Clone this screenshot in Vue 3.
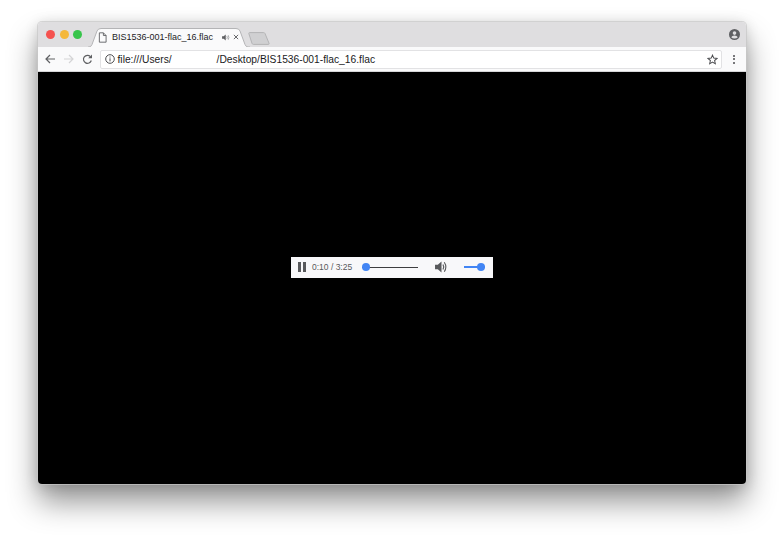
<script setup>
const fileName = 'BIS1536-001-flac_16.flac'
</script>

<template>
  <div class="page">
    <div class="window">
      <div class="tabstrip">
        <div class="lights">
          <span class="light red"></span>
          <span class="light yellow"></span>
          <span class="light green"></span>
        </div>
        <div class="tab">
          <svg class="tab-bg" width="162" height="19" viewBox="0 0 162 19">
            <path d="M0 19 L1 19 Q3 19 4 16.5 L9 3 Q10 .5 13 .5 L148 .5 Q151 .5 152 3 L157 16.5 Q158 19 160 19 L162 19" fill="#fafafb" stroke="#b4b4b6" />
          </svg>
          <svg class="tab-file" width="9" height="11" viewBox="0 0 10 12">
            <path d="M1.5 .8 H6 L9 3.8 V11.2 H1.5 Z M6 .8 V3.8 H9" fill="none" stroke="#5f6063" stroke-width="1" />
          </svg>
          <span class="tab-title">{{ fileName }}</span>
          <svg class="tab-audio" width="8" height="7" viewBox="0 0 9 8">
            <path d="M0 2.6 H1.8 L4.2 .6 V7.4 L1.8 5.4 H0 Z" fill="#5f6063" />
            <path d="M5.5 2.4 Q6.5 4 5.5 5.6 M7 1.4 Q8.6 4 7 6.6" fill="none" stroke="#8a8b8e" stroke-width=".8" />
          </svg>
          <svg class="tab-close" width="6" height="6" viewBox="0 0 7 7">
            <path d="M1 1 L6 6 M6 1 L1 6" stroke="#5f6063" stroke-width="1.1" />
          </svg>
        </div>
        <svg class="new-tab" width="22" height="13" viewBox="0 0 22 13">
          <path d="M.8 1.5 Q.7 .6 1.6 .6 H15.6 Q16.6 .6 17 1.5 L21 11.2 Q21.4 12.4 20.4 12.4 H5.4 Q4.4 12.4 4 11.4 Z" fill="#d0d0d2" stroke="#b4b4b6" />
        </svg>
        <svg class="profile" width="11" height="11" viewBox="0 0 11 11">
          <circle cx="5.5" cy="5.5" r="5.5" fill="#5f6063" />
          <circle cx="5.5" cy="4.1" r="1.8" fill="#dfdee0" />
          <path d="M2.2 8.2 Q3 6.5 5.5 6.5 Q8 6.5 8.8 8.2 Q7.5 9.5 5.5 9.5 Q3.5 9.5 2.2 8.2 Z" fill="#dfdee0" />
        </svg>
      </div>

      <div class="toolbar">
        <svg class="nav back" width="10" height="10" viewBox="0 0 10 10">
          <path d="M10 5 H1 M5 1 L1 5 L5 9" fill="none" stroke="#5f6063" stroke-width="1.2" />
        </svg>
        <svg class="nav forward" width="10" height="10" viewBox="0 0 10 10">
          <path d="M0 5 H9 M5 1 L9 5 L5 9" fill="none" stroke="#d4d4d6" stroke-width="1.2" />
        </svg>
        <svg class="nav reload" width="11" height="11" viewBox="0 0 11 11">
          <path d="M9.3 6.5 A4 4 0 1 1 8.4 2.6" fill="none" stroke="#5f6063" stroke-width="1.2" />
          <path d="M10 .4 V4.2 H6.2 Z" fill="#5f6063" />
        </svg>
        <div class="omnibox">
          <svg class="info" width="10" height="10" viewBox="0 0 10 10">
            <circle cx="5" cy="5" r="4.3" fill="none" stroke="#4c4d50" stroke-width="1" />
            <path d="M5 4.3 V7.4 M5 2.5 V3.5" stroke="#4c4d50" stroke-width="1" />
          </svg>
          <span class="url">file:///Users/</span>
          <span class="url url-rest">/Desktop/{{ fileName }}</span>
          <svg class="star" width="11" height="11" viewBox="0 0 12 12">
            <path d="M6 1.2 L7.4 4.5 L11 4.8 L8.3 7.1 L9.1 10.7 L6 8.8 L2.9 10.7 L3.7 7.1 L1 4.8 L4.6 4.5 Z" fill="none" stroke="#4c4d50" stroke-width="1.1" />
          </svg>
        </div>
        <div class="menu">
          <span></span><span></span><span></span>
        </div>
      </div>

      <div class="viewport">
        <div class="player">
          <div class="pause"><span></span><span></span></div>
          <span class="time">0:10 / 3:25</span>
          <div class="track seek">
            <span class="knob"></span>
          </div>
          <svg class="speaker" width="13" height="12" viewBox="0 0 14 13">
            <path d="M0 4 H3 L7 .6 V12.4 L3 9 H0 Z" fill="#58595c" />
            <path d="M8.6 3.8 Q10.3 6.5 8.6 9.2" fill="none" stroke="#58595c" stroke-width="1.3" />
            <path d="M10 1.4 Q13.4 6.5 10 11.6" fill="none" stroke="#58595c" stroke-width="1.2" />
          </svg>
          <div class="track volume">
            <span class="knob"></span>
          </div>
        </div>
      </div>
    </div>
  </div>
</template>

<style scoped>
.page {
  width: 784px;
  height: 538px;
  padding: 22px 0 0 38px;
  box-sizing: border-box;
  overflow: hidden;
  background: #fff;
  font-family: "Liberation Sans", Arial, sans-serif;
}

.window {
  width: 708px;
  height: 462px;
  display: flex;
  flex-direction: column;
  border-radius: 4px;
  overflow: hidden;
  box-shadow:
    0 0 0 1px rgba(200, 200, 200, 0.7),
    0 18px 30px rgba(0, 0, 0, 0.42),
    0 2px 14px rgba(0, 0, 0, 0.16);
}

.tabstrip {
  height: 25px;
  flex: none;
  display: flex;
  align-items: center;
  background: #dfdee0;
}

.lights {
  display: flex;
  gap: 4.5px;
  margin-left: 8px;
  width: 42px;
  flex: none;
}

.light {
  width: 9px;
  height: 9px;
  border-radius: 50%;
}

.red { background: #f5524f; }
.yellow { background: #f5b83b; }
.green { background: #37c54b; }

.tab {
  position: relative;
  width: 162px;
  height: 19px;
  padding-bottom: 1px;
  box-sizing: border-box;
  flex: none;
  align-self: flex-end;
  display: flex;
  align-items: center;
}

.tab-bg {
  position: absolute;
  left: 0;
  top: 0;
}

.tab-file,
.tab-title,
.tab-audio,
.tab-close {
  position: relative;
}

.tab-file {
  margin-left: 10px;
}

.tab-title {
  margin-left: 5px;
  font-size: 9px;
  color: #1d1d1f;
  white-space: nowrap;
  width: 110px;
}

.tab-close {
  margin-left: 3px;
}

.new-tab {
  margin-left: -2px;
  margin-top: 7px;
  flex: none;
}

.profile {
  margin-left: auto;
  margin-right: 6px;
  flex: none;
}

.toolbar {
  height: 25px;
  flex: none;
  display: flex;
  align-items: center;
  background: #fafafb;
  box-sizing: border-box;
  border-bottom: 1px solid #d6d6d8;
}

.nav {
  flex: none;
}

.back { margin-left: 7px; }
.forward { margin-left: 9px; }
.reload { margin-left: 8px; }

.omnibox {
  flex: none;
  width: 622px;
  height: 19px;
  margin-left: 7px;
  box-sizing: border-box;
  background: #fff;
  border: 1px solid #e2e2e4;
  border-radius: 2px;
  display: flex;
  align-items: center;
  font-size: 10.25px;
  color: #1a1a1c;
}

.info {
  margin-left: 3.5px;
  flex: none;
}

.url {
  margin-left: 3px;
  white-space: nowrap;
}

.url-rest {
  margin-left: 45px;
}

.star {
  margin-left: auto;
  margin-right: 3.5px;
  flex: none;
}

.menu {
  flex: none;
  margin-left: 11px;
  display: flex;
  flex-direction: column;
  gap: 1.5px;
}

.menu span {
  width: 2px;
  height: 2px;
  background: #4c4d50;
  border-radius: 50%;
}

.viewport {
  flex: 1;
  display: flex;
  align-items: center;
  justify-content: center;
  background: #000;
}

.player {
  width: 202px;
  height: 21px;
  margin-bottom: 22px;
  display: flex;
  align-items: center;
  background: #f8f8fa;
}

.pause {
  display: flex;
  gap: 2px;
  margin-left: 7px;
  flex: none;
}

.pause span {
  width: 3px;
  height: 10px;
  background: #58595c;
}

.time {
  margin-left: 6px;
  width: 44px;
  flex: none;
  font-size: 8.5px;
  color: #58595c;
  white-space: nowrap;
}

.track {
  position: relative;
  flex: none;
}

.seek {
  height: 1px;
  margin-left: 6px;
  width: 56px;
  background: #3e3e40;
}

.volume {
  height: 2px;
  margin-left: 16px;
  width: 21px;
  background: #4285f4;
}

.knob {
  position: absolute;
  width: 8px;
  height: 8px;
  border-radius: 50%;
  background: #4285f4;
}

.seek .knob { left: 0; top: -3.5px; }
.volume .knob { right: 0; top: -3px; }

.speaker {
  margin-left: 17px;
  flex: none;
}
</style>

<style>
html,
body {
  margin: 0;
  background: #fff;
}
</style>
